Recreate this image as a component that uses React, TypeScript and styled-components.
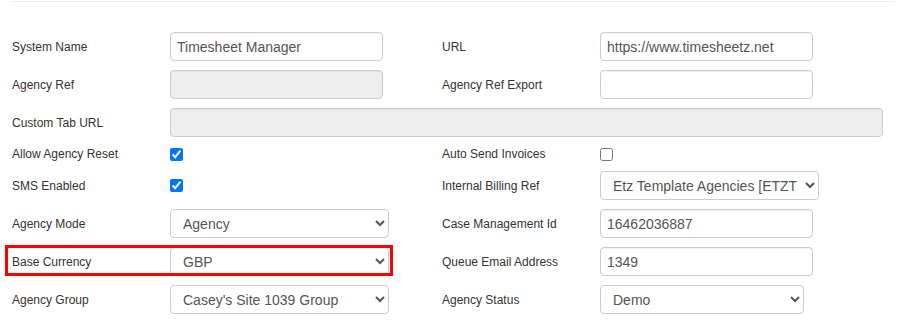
import React from 'react';
import styled, { createGlobalStyle } from 'styled-components';

const GlobalStyle = createGlobalStyle`
  html, body {
    margin: 0;
    padding: 0;
    background: #fff;
  }
  body {
    font-family: "Liberation Sans", Arial, sans-serif;
    color: #333;
  }
`;

const Page = styled.div`
  width: 918px;
  height: 321px;
  overflow: hidden;
  padding-top: 1px;
  box-sizing: border-box;
`;

const Divider = styled.div`
  margin: 0 23px 0 12px;
  border-top: 1px solid #eee;
`;

const Form = styled.form`
  display: flex;
  flex-direction: column;
  gap: 9px;
  padding: 30px 0 0 12px;
`;

const Row = styled.div<{ $compact?: boolean }>`
  position: relative;
  display: grid;
  grid-template-columns: 158px 272px 158px 1fr;
  align-items: center;
  min-height: ${(p) => (p.$compact ? '16px' : '29px')};
`;

const Label = styled.label`
  font-size: 12px;
  line-height: 14px;
  color: #333;
  white-space: nowrap;
`;

const Cell = styled.div<{ $span?: number }>`
  display: flex;
  align-items: center;
  grid-column: ${(p) => (p.$span ? `span ${p.$span}` : 'auto')};
`;

const TextInput = styled.input<{ $width?: number }>`
  box-sizing: border-box;
  width: ${(p) => (p.$width ? `${p.$width}px` : '213px')};
  height: 29px;
  padding: 0 6px;
  border: 1px solid #ccc;
  border-radius: 4px;
  font-family: "Liberation Sans", Arial, sans-serif;
  font-size: 14px;
  color: #555;
  background: #fff;
  outline: none;
  box-shadow: inset 0 1px 1px rgba(0, 0, 0, 0.05);

  &:disabled {
    background: #eee;
  }
`;

const Select = styled.select<{ $width?: number }>`
  box-sizing: border-box;
  width: ${(p) => (p.$width ? `${p.$width}px` : '219px')};
  height: 29px;
  padding: 0 4px 0 8px;
  border: 1px solid #ccc;
  border-radius: 4px;
  font-family: "Liberation Sans", Arial, sans-serif;
  font-size: 14px;
  color: #555;
  background: #fff;
  outline: none;
`;

const Check = styled.input`
  width: 13px;
  height: 13px;
  margin: 0;
  accent-color: #0075ff;
`;

const Highlight = styled.div`
  position: absolute;
  left: -7px;
  top: -2px;
  width: 388px;
  height: 31px;
  box-sizing: border-box;
  border: 3px solid #ff0000;
  pointer-events: none;
`;

const App: React.FC = () => {
  return (
    <Page>
      <GlobalStyle />
      <Divider />
      <Form onSubmit={(e) => e.preventDefault()}>
        <Row>
          <Label>System Name</Label>
          <Cell>
            <TextInput defaultValue="Timesheet Manager" />
          </Cell>
          <Label>URL</Label>
          <Cell>
            <TextInput defaultValue="https://www.timesheetz.net" />
          </Cell>
        </Row>

        <Row>
          <Label>Agency Ref</Label>
          <Cell>
            <TextInput disabled defaultValue="" />
          </Cell>
          <Label>Agency Ref Export</Label>
          <Cell>
            <TextInput defaultValue="" />
          </Cell>
        </Row>

        <Row>
          <Label>Custom Tab URL</Label>
          <Cell $span={3}>
            <TextInput disabled $width={713} defaultValue="" />
          </Cell>
        </Row>

        <Row $compact>
          <Label>Allow Agency Reset</Label>
          <Cell>
            <Check type="checkbox" defaultChecked />
          </Cell>
          <Label>Auto Send Invoices</Label>
          <Cell>
            <Check type="checkbox" />
          </Cell>
        </Row>

        <Row>
          <Label>SMS Enabled</Label>
          <Cell>
            <Check type="checkbox" defaultChecked />
          </Cell>
          <Label>Internal Billing Ref</Label>
          <Cell>
            <Select defaultValue="etzt">
              <option value="etzt">Etz Template Agencies [ETZT</option>
            </Select>
          </Cell>
        </Row>

        <Row>
          <Label>Agency Mode</Label>
          <Cell>
            <Select defaultValue="agency">
              <option value="agency">Agency</option>
            </Select>
          </Cell>
          <Label>Case Management Id</Label>
          <Cell>
            <TextInput defaultValue="16462036887" />
          </Cell>
        </Row>

        <Row>
          <Label>Base Currency</Label>
          <Cell>
            <Select defaultValue="gbp">
              <option value="gbp">GBP</option>
            </Select>
          </Cell>
          <Label>Queue Email Address</Label>
          <Cell>
            <TextInput defaultValue="1349" />
          </Cell>
          <Highlight />
        </Row>

        <Row>
          <Label>Agency Group</Label>
          <Cell>
            <Select defaultValue="casey">
              <option value="casey">Casey's Site 1039 Group</option>
            </Select>
          </Cell>
          <Label>Agency Status</Label>
          <Cell>
            <Select $width={204} defaultValue="demo">
              <option value="demo">Demo</option>
            </Select>
          </Cell>
        </Row>
      </Form>
    </Page>
  );
};

export default App;
